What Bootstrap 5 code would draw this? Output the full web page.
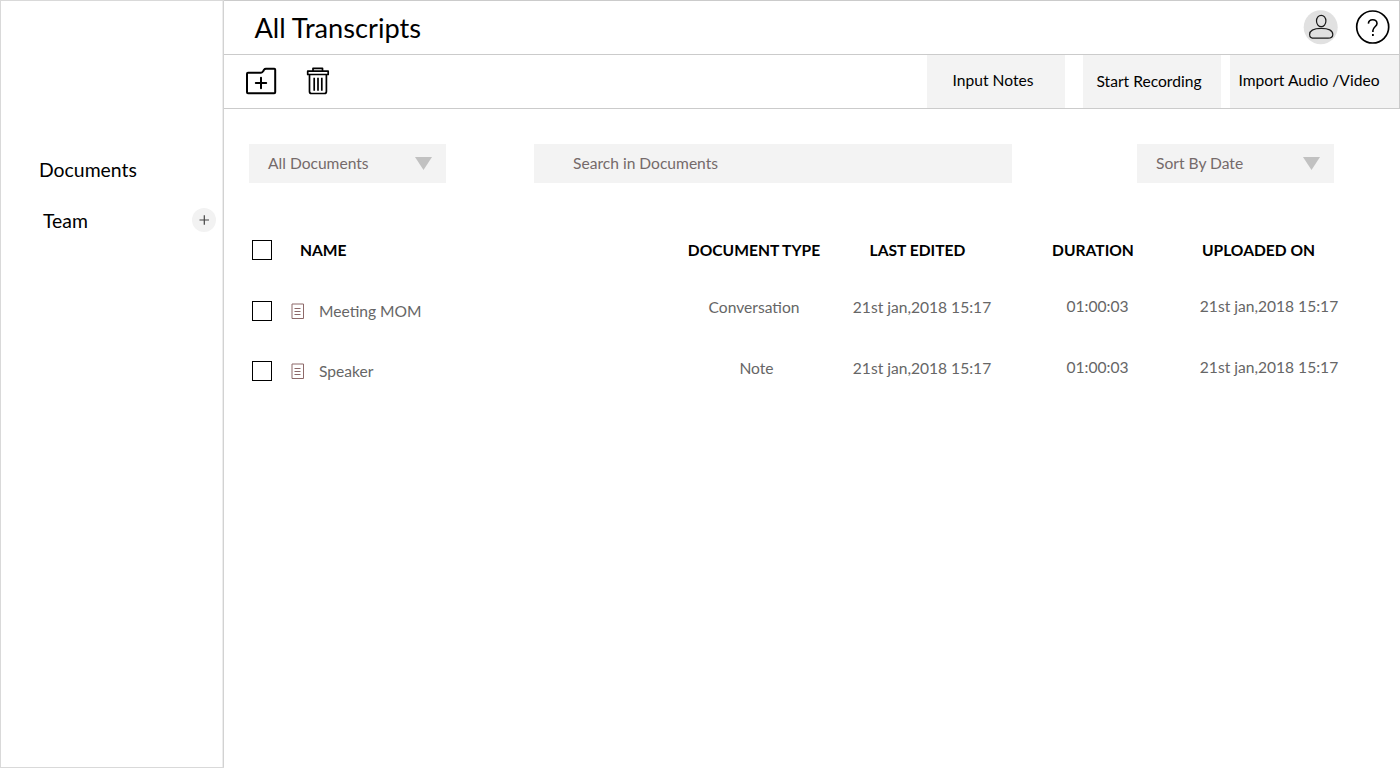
<!DOCTYPE html>
<html lang="en">
<head>
<meta charset="utf-8">
<meta name="viewport" content="width=device-width, initial-scale=1">
<title>All Transcripts</title>
<link href="https://cdn.jsdelivr.net/npm/bootstrap@5.3.0/dist/css/bootstrap.min.css" rel="stylesheet">
<style>
  body { font-family: Lato, Carlito, sans-serif; font-size: 15.6px; line-height: 20px; color: #000; background: #fff; }
  .app { height: 768px; }
  .side { width: 224px; border: solid #d9d9d9; border-width: 1px 0 1px 1px; box-shadow: inset -1px 0 #d2d2d2, inset -2px 0 #ededed; padding-top: 157px; font-size: 19.4px; line-height: 24px; }
  .side a { color: #000; }
  .side-docs { padding-left: 38px; }
  .side-team { margin-top: 27px; padding-left: 42px; padding-right: 8.5px; }
  .icon-btn { display: flex; border: 0; padding: 0; background: none; }
  .add-btn { width: 24px; height: 24px; background: #f2f2f2; margin-top: -3px; }
  .topbar { height: 55px; border: solid #cbcbcb; border-width: 1px 1px 1px 0; padding: 0 8px 0 30.5px; }
  .topbar h1 { font-size: 27.2px; line-height: 34px; font-weight: 400; }
  .top-icons { padding-bottom: 1px; }
  .toolbar { height: 54px; border: solid #cbcbcb; border-width: 0 1px 1px 0; padding-left: 21px; }
  .tool-btn { background: #f3f3f3; border: 0; width: 138px; color: #000; padding: 0 0 3px; white-space: nowrap; }
  .tool-rec { padding: 0 6px 2px 0; margin: 0 9px 0 18px; }
  .tool-input { padding-right: 6px; }
  .tool-wide { width: 169px; padding-right: 11px; }
  .filters { padding: 35px 66px 0 25px; }
  .field { height: 39px; background: #f3f3f3; color: #756a6a; border: 0; }
  .pick { width: 197px; padding: 0 14px 2px 19px; }
  .pick svg { margin-top: 1px; }
  .search { width: 478px; padding: 0 0 2px 39px; margin-right: 37px; }
  .search::placeholder { color: #756a6a; opacity: 1; }
  .docs { padding-top: 37px; }
  .doc-row { display: grid; grid-template-columns: 39.5px 391.5px 143px 193px 158px 185px; padding-left: 27.5px; height: 61px; align-items: center; color: #666; }
  .doc-row:last-child { height: 60px; }
  .doc-head { color: #000; font-weight: 700; height: 60px; }
  .doc-name { gap: 15px; }
  .col-name { padding-left: 9px; }
  .cell-mid { text-align: center; white-space: nowrap; }
  .doc-row:not(.doc-head) .cell-mid { padding-bottom: 7px; }
  .doc-row:not(.doc-head) .cell-up { padding-bottom: 9px; }
  .doc-row:last-child .col-type { padding-left: 5px; }
  .doc-head .col-edit { padding-right: 9px; }
  .doc-head .col-time { padding-right: 9px; }
  .doc-head .col-load { padding-right: 21px; }
  .tick { appearance: none; width: 20px; height: 20px; border: 1.500px solid #000; margin: 0; background: #fff; }
</style>
</head>
<body>
<div class="app d-flex">
  <aside class="side flex-shrink-0">
    <div class="side-docs"><a class="text-decoration-none" href="#">Documents</a></div>
    <div class="side-team d-flex justify-content-between align-items-center">
      <a class="text-decoration-none" href="#">Team</a>
      <button class="icon-btn add-btn rounded-circle" aria-label="Add team">
        <svg width="24" height="24" viewBox="0 0 24 24" stroke="#444" stroke-width="1.200"><path d="M7.500 12H17M12.300 7.300V16.700"/></svg>
      </button>
    </div>
  </aside>
  <main class="flex-grow-1">
    <header class="topbar d-flex align-items-center justify-content-between">
      <h1 class="m-0">All Transcripts</h1>
      <div class="top-icons d-flex gap-3">
        <button class="icon-btn" aria-label="Account">
          <svg width="36" height="36" viewBox="0 0 36 36" fill="none" stroke="#1a1a1a" stroke-width="1.200"><circle cx="17.700" cy="18.300" r="17" fill="#e1e1e1" stroke="none"/><ellipse cx="18.200" cy="12" rx="4.700" ry="5.700"/><path d="M6.600 25.500C6.600 21.300 11 19.300 18.200 19.300S29.800 21.300 29.800 25.500C29.800 28.300 28 29.200 25 29.200H11.400C8.400 29.200 6.600 28.300 6.600 25.500Z"/></svg>
        </button>
        <button class="icon-btn" aria-label="Help">
          <svg width="36" height="36" viewBox="0 0 36 36" fill="none" stroke="#000"><circle cx="17.700" cy="18" r="16" stroke-width="1.700"/><path d="M13.400 14.600C13.600 12 15.400 10.700 17.700 10.700S22 12.200 22 14.400C22 17.700 17.900 17.900 17.900 21.600V23" stroke-width="1.600"/><path d="M17.900 24.900V26.900" stroke-width="1.800"/></svg>
        </button>
      </div>
    </header>
    <div class="toolbar d-flex justify-content-between">
      <div class="d-flex align-items-center">
        <button class="icon-btn" aria-label="New folder">
          <svg width="32" height="32" viewBox="0 0 32 32" fill="none" stroke="#000" stroke-width="2" stroke-linejoin="round" stroke-linecap="round"><path d="M3 6.700H16Q17.500 6.700 18.200 5.200L19 3.800Q19.700 2.800 21 2.800H29.300Q30.200 2.800 30.200 3.700V26.200Q30.200 27.200 29.200 27.200H3Q2 27.200 2 26.200V7.700Q2 6.700 3 6.700Z"/><path d="M10.800 17H21.200M16 11.800V22.200"/></svg>
        </button>
        <button class="icon-btn ms-4" aria-label="Delete">
          <svg width="32" height="32" viewBox="0 0 32 32" fill="none" stroke="#000" stroke-width="1.700" stroke-linejoin="round"><path d="M12 5V2.300H21.500V5M6.700 5.200H27.200V8.500H6.700ZM8.500 8.500V25.500Q8.500 27.500 10.500 27.500H23.400Q25.400 27.500 25.400 25.500V8.500M13.200 11.700V24.800M17 11.700V24.800M20.800 11.700V24.800"/></svg>
        </button>
      </div>
      <div class="d-flex">
        <button class="tool-btn tool-input">Input Notes</button>
        <button class="tool-btn tool-rec">Start Recording</button>
        <button class="tool-btn tool-wide">Import Audio /Video</button>
      </div>
    </div>
    <div class="filters d-flex justify-content-between">
      <button class="field pick d-flex align-items-center justify-content-between">All Documents
        <svg width="17" height="13" viewBox="0 0 17 13"><path d="M0 0H17L8.500 13Z" fill="#c1c1c1"/></svg>
      </button>
      <input class="field search" type="text" placeholder="Search in Documents" aria-label="Search in Documents">
      <button class="field pick d-flex align-items-center justify-content-between">Sort By Date
        <svg width="17" height="13" viewBox="0 0 17 13"><path d="M0 0H17L8.500 13Z" fill="#c1c1c1"/></svg>
      </button>
    </div>
    <div class="docs">
      <div class="doc-row doc-head">
        <input class="tick" type="checkbox" aria-label="Select all">
        <div class="col-name">NAME</div>
        <div class="cell-mid">DOCUMENT TYPE</div>
        <div class="cell-mid col-edit">LAST EDITED</div>
        <div class="cell-mid col-time">DURATION</div>
        <div class="cell-mid col-load">UPLOADED ON</div>
      </div>
      <div class="doc-row">
        <input class="tick" type="checkbox" aria-label="Select Meeting MOM">
        <div class="doc-name d-flex align-items-center">
          <svg width="13" height="16" viewBox="0 0 13 16" fill="none" stroke="#8d6868"><path d="M1 1H12.500V15.500H1Z"/><path d="M3.500 5.500H9.500M3.500 8.500H9.500M3.500 11.500H9.500"/></svg>
          <span>Meeting MOM</span>
        </div>
        <div class="cell-mid col-type">Conversation</div>
        <div class="cell-mid">21st jan,2018 15:17</div>
        <div class="cell-mid cell-up">01:00:03</div>
        <div class="cell-mid cell-up">21st jan,2018 15:17</div>
      </div>
      <div class="doc-row">
        <input class="tick" type="checkbox" aria-label="Select Speaker">
        <div class="doc-name d-flex align-items-center">
          <svg width="13" height="16" viewBox="0 0 13 16" fill="none" stroke="#8d6868"><path d="M1 1H12.500V15.500H1Z"/><path d="M3.500 5.500H9.500M3.500 8.500H9.500M3.500 11.500H9.500"/></svg>
          <span>Speaker</span>
        </div>
        <div class="cell-mid col-type">Note</div>
        <div class="cell-mid">21st jan,2018 15:17</div>
        <div class="cell-mid cell-up">01:00:03</div>
        <div class="cell-mid cell-up">21st jan,2018 15:17</div>
      </div>
    </div>
  </main>
</div>
<script src="https://cdn.jsdelivr.net/npm/bootstrap@5.3.0/dist/js/bootstrap.bundle.min.js"></script>
</body>
</html>
